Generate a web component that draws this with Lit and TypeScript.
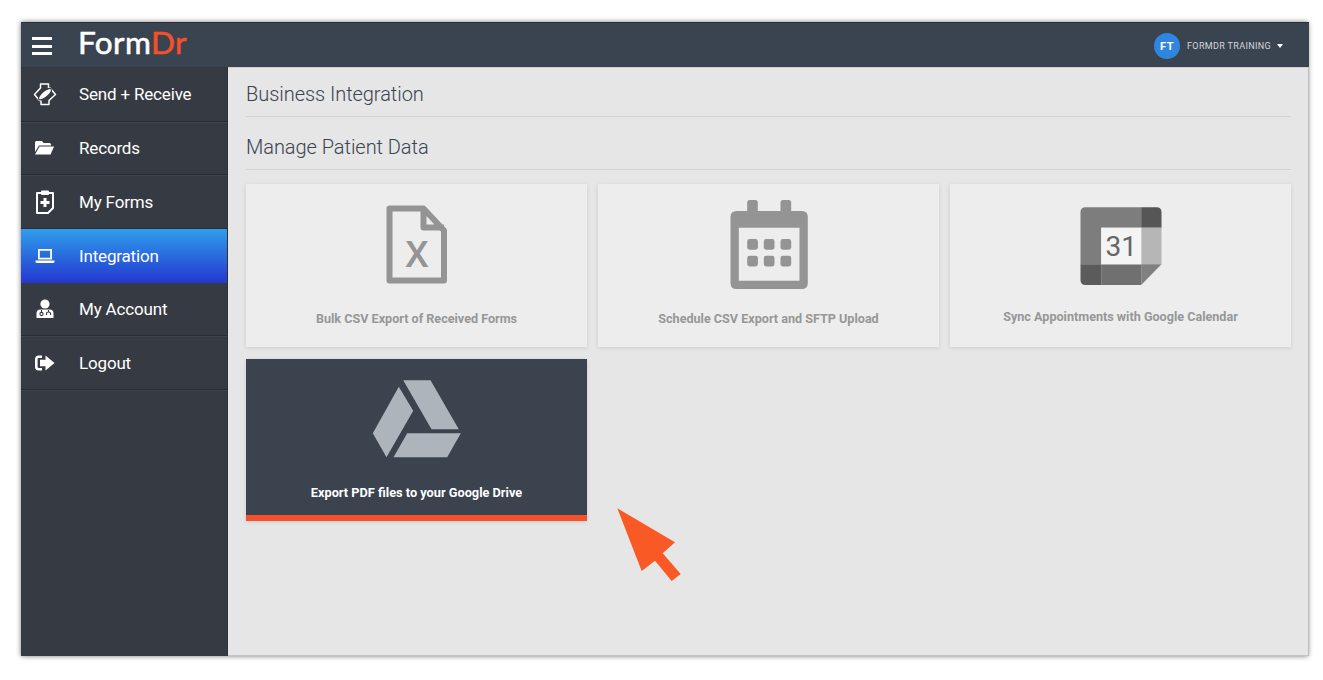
import { LitElement, html, css, svg } from "lit";
import { customElement } from "lit/decorators.js";

const navIcons = {
  send: svg`<path d="M7.5 1 H15.5 V5 H17 L22.5 11.5 L16 17.5 V21.5 H8 V17.5 H6.5 L1.5 11.5 L7.5 5 Z" fill="none" stroke="#fff" stroke-width="1.5" stroke-linejoin="round"/><ellipse cx="12" cy="11.2" rx="8" ry="3" transform="rotate(-40 12 11.2)" fill="#fff" stroke="#363a42" stroke-width="1"/>`,
  folder: svg`<path d="M1 3.5 Q1 2 2.5 2 H8 L9.5 4 H15.5 Q17 4 17 5.5 V6.5 H5 L1 13 Z" fill="#fff"/><path d="M5.5 7.5 H20 L16.5 15.5 H1 Z" fill="#fff"/>`,
  forms: svg`<path d="M6 3 H2 V23 H13 L18 18 V3 H14" fill="none" stroke="#fff" stroke-width="2" stroke-linejoin="round"/><rect x="6" y="0.5" width="8" height="4.5" rx="1" fill="#fff"/><path d="M8.5 8 H11.5 V11 H14.5 V14 H11.5 V17 H8.5 V14 H5.5 V11 H8.5 Z" fill="#fff"/>`,
  laptop: svg`<path d="M3 1 H17 V11.5 H3 Z M4.8 2.8 V9.7 H15.2 V2.8 Z" fill="#fff" fill-rule="evenodd"/><path d="M0.5 12.6 H19.5 V13.5 Q19.5 15 18 15 H2 Q0.5 15 0.5 13.5 Z" fill="#fff"/>`,
  account: svg`<circle cx="9" cy="5" r="4.6" fill="#fff"/><path d="M0.5 19 V14.5 Q0.5 10.5 4.5 10.5 H13.5 Q17.5 10.5 17.5 14.5 V19 Z" fill="#fff"/><g fill="none" stroke="#363a42" stroke-width="1.1"><path d="M5.5 11 V13.5"/><circle cx="5.5" cy="15" r="1.6"/><path d="M12.5 11 V13"/><path d="M10.5 16 V14.5 Q10.5 13 12.5 13 Q14.5 13 14.5 14.5 V16"/></g>`,
  logout: svg`<path d="M7 1.7 H3.8 Q1.3 1.7 1.3 4.2 V11.8 Q1.3 14.3 3.8 14.3 H7" fill="none" stroke="#fff" stroke-width="2.6"/><path d="M5 4.8 H10.5 V0.5 L19.5 8 L10.5 15.5 V11.2 H5 Z" fill="#fff"/>`,
};

const items = [
  { label: "Send + Receive", icon: navIcons.send, box: "0 0 24 23", w: 24, h: 23 },
  { label: "Records", icon: navIcons.folder, box: "0 0 21 17", w: 21, h: 17 },
  { label: "My Forms", icon: navIcons.forms, box: "0 0 20 24", w: 20, h: 24 },
  { label: "Integration", icon: navIcons.laptop, box: "0 0 20 16", w: 20, h: 16, active: true },
  { label: "My Account", icon: navIcons.account, box: "0 0 18 20", w: 18, h: 20 },
  { label: "Logout", icon: navIcons.logout, box: "0 0 20 16", w: 20, h: 16 },
];

const docIcon = svg`<path d="M22.5 12.5 H56.5 L77 34.5 V84.5 H22.5 Z M56.5 12.5 V31.5 H77" fill="none" stroke="#949494" stroke-width="6" stroke-linejoin="round"/><text x="50" y="70.7" text-anchor="middle" class="x">X</text>`;

const calIcon = svg`<path fill="#949494" fill-rule="evenodd" d="M30.7 4 H36.2 Q38.8 4 38.8 6.5 V15 H61.5 V6.5 Q61.5 4 64 4 H69.7 Q72.2 4 72.2 6.5 V15 H82.8 Q88.8 15 88.8 21 V87 Q88.8 93 82.8 93 H17.5 Q11.5 93 11.5 87 V21 Q11.5 15 17.5 15 H28.2 V6.5 Q28.2 4 30.7 4 Z M19.8 31.7 V84.7 H80.5 V31.7 Z"/>
  ${[28.2, 44.8, 61.5].flatMap((x) =>
    [43, 59.7].map((y) => svg`<rect x=${x} y=${y} width="10.7" height="10.7" rx="2.4" fill="#949494"/>`)
  )}`;

const gcalIcon = svg`<path d="M14.5 11.3 H70.2 V31.7 H30.2 V68.3 H9.5 V16.3 Q9.5 11.3 14.5 11.3 Z" fill="#7d7d7d"/>
  <path d="M70.2 11.3 H85.5 Q90.5 11.3 90.5 16.3 V31.7 H70.2 Z" fill="#565656"/>
  <rect x="70.2" y="31.7" width="20.3" height="36.6" fill="#b6b6b6"/>
  <path d="M9.5 68.3 H30.2 V89 H14.5 Q9.5 89 9.5 84 Z" fill="#5b5b5b"/>
  <rect x="30.2" y="68.3" width="40" height="20.7" fill="#707070"/>
  <path d="M70.2 68.3 H90.5 L70.2 89 Z" fill="#808080"/>
  <rect x="30.2" y="31.7" width="40" height="36.6" fill="#f4f4f4"/>
  <text x="50.2" y="59.7" text-anchor="middle" class="num">31</text>`;

const driveIcon = svg`<g fill="#aeb4bb"><path d="M31.8 15.7 L46.2 39.7 L19.5 86.3 L5.8 62.3 Z"/><path d="M36.2 9.3 H63.5 L91.8 58.3 H64.5 Z"/><path d="M40.2 62.3 H93.8 L80.2 86.3 H26.5 Z"/></g>`;

const cards = [
  { label: "Bulk CSV Export of Received Forms", icon: docIcon },
  { label: "Schedule CSV Export and SFTP Upload", icon: calIcon },
  { label: "Sync Appointments with Google Calendar", icon: gcalIcon, cls: "raised" },
  { label: "Export PDF files to your Google Drive", icon: driveIcon, cls: "dark" },
];

@customElement("app-root")
export class AppRoot extends LitElement {
  static styles = css`
    :host {
      display: block;
      height: 680px;
      box-sizing: border-box;
      padding: 22px 15px 24px 21px;
      background: #fff;
      font-family: Roboto, "Noto Sans", sans-serif;
      overflow: hidden;
    }
    .frame {
      position: relative;
      height: 100%;
      display: grid;
      grid-template-columns: 207px 1fr;
      grid-template-rows: 45px 1fr;
      box-shadow: 0 0 5px rgba(0, 0, 0, 0.55);
    }
    .top {
      grid-column: 1 / 3;
      display: flex;
      align-items: center;
      background: #3a4350;
      border-top: 1px solid #2a2f38;
      box-sizing: border-box;
      padding-top: 2px;
    }
    .burger {
      display: flex;
      flex-direction: column;
      gap: 4.6px;
      width: 20px;
      margin-left: 11px;
    }
    .burger i {
      display: block;
      height: 3px;
      background: #fff;
    }
    .logo {
      margin-left: 26px;
      margin-bottom: 6px;
      font: 400 31.5px/1 Lato, sans-serif;
      letter-spacing: 0.4px;
      color: #fff;
      -webkit-text-stroke: 0.6px currentColor;
    }
    .logo b {
      font-weight: 400;
      color: #f4502a;
    }
    .user {
      margin-left: auto;
      margin-right: 26px;
      display: flex;
      align-items: center;
      color: #d4d7da;
      font-size: 9px;
      letter-spacing: 0.35px;
    }
    .avatar {
      width: 26px;
      height: 26px;
      border-radius: 50%;
      background: #2f86e0;
      color: #fff;
      font-size: 11px;
      font-weight: 700;
      letter-spacing: 0.5px;
      display: flex;
      align-items: center;
      justify-content: center;
      margin-right: 7px;
    }
    .caret {
      width: 0;
      height: 0;
      margin-left: 6px;
      border-left: 3px solid transparent;
      border-right: 3px solid transparent;
      border-top: 4px solid #fff;
    }
    .side {
      background: #363a42;
      border-right: 1px solid #2c3037;
      border-top: 1px solid #33383f;
    }
    .row {
      height: 53.65px;
      box-sizing: border-box;
      display: flex;
      align-items: center;
      border-bottom: 1px solid #292c32;
      box-shadow: 0 1px 0 #3f434b;
      color: #fff;
      font-size: 17px;
      letter-spacing: -0.17px;
    }
    .row.active {
      background: linear-gradient(#2f9eec, #2438d0);
      border-bottom: none;
      box-shadow: none;
    }
    .icon {
      width: 47px;
      margin-right: 11px;
      display: flex;
      justify-content: center;
      flex: none;
    }
    .main {
      background: #e6e6e6;
      padding: 0 17px 0 18px;
      border-top: 1px solid #cfd0d1;
      border-right: 1px solid #bdbdbd;
      border-bottom: 1px solid #c4c4c4;
      position: relative;
    }
    h2 {
      margin: 0;
      height: 49px;
      box-sizing: border-box;
      padding-top: 10px;
      font-size: 20px;
      line-height: 32px;
      letter-spacing: -0.05px;
      font-weight: 300;
      color: #3a4350;
      border-bottom: 1px solid #d2d2d2;
    }
    h2 + h2 {
      height: 53px;
      padding-top: 14px;
    }
    .grid {
      display: grid;
      grid-template-columns: repeat(3, 341px);
      grid-auto-rows: 163px;
      column-gap: 11px;
      row-gap: 12px;
      margin-top: 14px;
    }
    .card {
      background: #ededed;
      box-shadow: 0 1px 4px rgba(0, 0, 0, 0.12);
      display: flex;
      flex-direction: column;
      align-items: center;
      padding-top: 12px;
      box-sizing: border-box;
    }
    .card svg {
      width: 100px;
      height: 100px;
      flex: none;
    }
    .label {
      margin-top: 13px;
      font-size: 12.6px;
      line-height: 20px;
      font-weight: 700;
      color: #979797;
    }
    .raised .label {
      margin-top: 11px;
    }
    .dark {
      background: #3b434f;
      height: 162px;
      border-bottom: 6px solid #f4502a;
    }
    .dark .label {
      margin-top: 12px;
      color: #fff;
      font-size: 12.75px;
    }
    .x {
      font: 600 36px "Noto Sans", sans-serif;
      fill: #949494;
    }
    .num {
      font: 400 28px Roboto, sans-serif;
      fill: #666;
    }
    .pointer {
      position: absolute;
      left: 389px;
      top: 440px;
      width: 64px;
      height: 74px;
    }
  `;

  render() {
    return html`
      <div class="frame">
        <header class="top">
          <div class="burger"><i></i><i></i><i></i></div>
          <div class="logo">Form<b>Dr</b></div>
          <div class="user">
            <span class="avatar">FT</span>
            <span>FORMDR TRAINING</span>
            <span class="caret"></span>
          </div>
        </header>
        <nav class="side">
          ${items.map(
            (it) => html`
              <div class="row ${it.active ? "active" : ""}">
                <span class="icon">
                  <svg width=${it.w} height=${it.h} viewBox=${it.box}>${it.icon}</svg>
                </span>
                ${it.label}
              </div>
            `
          )}
        </nav>
        <main class="main">
          <h2>Business Integration</h2>
          <h2>Manage Patient Data</h2>
          <div class="grid">
            ${cards.map(
              (c) => html`
                <div class="card ${c.cls ?? ""}">
                  <svg viewBox="0 0 100 100">${c.icon}</svg>
                  <div class="label">${c.label}</div>
                </div>
              `
            )}
          </div>
          <svg class="pointer" viewBox="617 508 64 74">
            <path d="M617.3 508.3 L675 542.3 L662.7 553.3 L680.7 574 L671.7 581 L655 560.7 L641.7 571 Z" fill="#f95a25"/>
          </svg>
        </main>
      </div>
    `;
  }
}
